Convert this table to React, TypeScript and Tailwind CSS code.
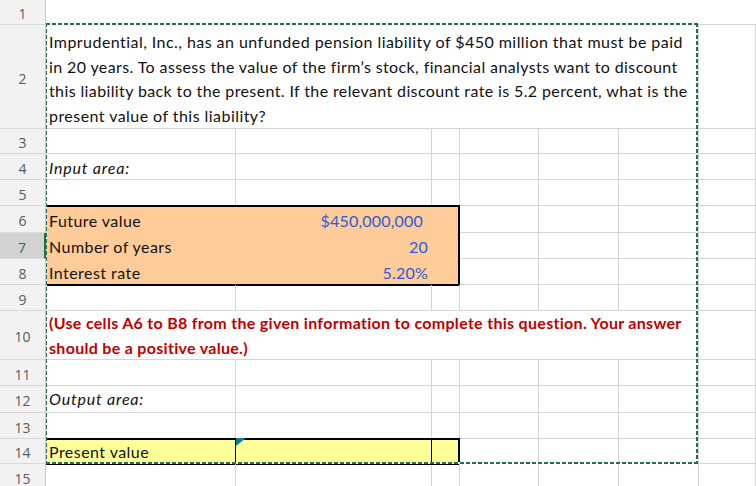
import React from "react";

const FONT = { fontFamily: "Lato, 'Liberation Sans', sans-serif" };
const HFONT = { fontFamily: "'Open Sans', 'Noto Sans', sans-serif" };

const G = "border-r border-b border-[#d4d4d4]";

function Hdr({ n, sel }: { n: number; sel?: boolean }) {
  return (
    <div
      style={HFONT}
      className={
        sel
          ? "flex items-center justify-center pt-[3px] text-[14px] tracking-normal bg-[#d2d2d2] text-[#217346] border-b border-[#d9d9d9] border-r-2 border-r-[#217346]"
          : "flex items-center justify-center pt-[3px] text-[14px] tracking-normal bg-[#f2f2f2] text-[#5a5a5a] border-b border-[#d9d9d9] border-r border-r-[#c8c8c8]"
      }
    >
      {n}
    </div>
  );
}

function Blank() {
  return <div className={G} />;
}

function Blanks({ n }: { n: number }) {
  return (
    <>
      {Array.from({ length: n }).map((_, i) => (
        <Blank key={i} />
      ))}
    </>
  );
}

export default function App() {
  return (
    <div
      className="relative w-[756px] h-[486px] overflow-hidden bg-white text-[#111] text-[16px] tracking-[0.45px]"
      style={FONT}
    >
      <div className="grid grid-cols-[46px_190px_196px_28px_79px_80px_80px_1fr] grid-rows-[25px_104px_25px_26px_26px_27px_26px_26px_26px_49px_26px_27px_26px_25px_26px]">
        {/* Row 1 */}
        <Hdr n={1} />
        <div className="col-span-7 border-b border-[#d4d4d4]" />

        {/* Row 2 */}
        <Hdr n={2} />
        <div className="col-span-6 border-r border-b border-[#d4d4d4] pl-[3px] pt-[5px] leading-[24.5px] whitespace-nowrap">
          <div>Imprudential, Inc., has an unfunded pension liability of $450 million that must be paid</div>
          <div className="tracking-[0.39px]">in 20 years. To assess the value of the firm’s stock, financial analysts want to discount</div>
          <div className="tracking-[0.38px]">this liability back to the present. If the relevant discount rate is 5.2 percent, what is the</div>
          <div>present value of this liability?</div>
        </div>
        <Blank />

        {/* Row 3 */}
        <Hdr n={3} />
        <Blanks n={7} />

        {/* Row 4 */}
        <Hdr n={4} />
        <div className={`${G} flex items-end pl-[3px] pb-[2px] leading-[18px] italic tracking-[0.8px]`}>Input area:</div>
        <Blanks n={6} />

        {/* Row 5 */}
        <Hdr n={5} />
        <Blanks n={7} />

        {/* Row 6-8 */}
        <Hdr n={6} />
        <div className="col-span-3 row-span-3 -mt-px -mb-px border-t-2 border-b-2 border-r-2 border-black bg-[#ffcc99] grid grid-rows-[25px_26px_26px] grid-cols-[190px_196px_1fr] leading-[18px]">
          <div className="flex items-end pl-[3px] pb-[2px]">Future value</div>
          <div className="flex items-end justify-end pr-[9px] pb-[2px] text-[#2d5bd6] tracking-[0.2px]">$450,000,000</div>
          <div />
          <div className="flex items-end pl-[3px] pb-[2px]">Number of years</div>
          <div className="flex items-end justify-end pr-[4px] pb-[2px] text-[#2d5bd6] tracking-[0.2px]">20</div>
          <div />
          <div className="flex items-end pl-[3px] pb-[2px]">Interest rate</div>
          <div className="flex items-end justify-end pr-[4px] pb-[2px] text-[#2d5bd6] tracking-[0.2px]">5.20%</div>
          <div />
        </div>
        <Blanks n={4} />
        <Hdr n={7} sel />
        <Blanks n={4} />
        <Hdr n={8} />
        <Blanks n={4} />

        {/* Row 9 */}
        <Hdr n={9} />
        <Blanks n={7} />

        {/* Row 10 */}
        <Hdr n={10} />
        <div className="col-span-6 border-r border-b border-[#d4d4d4] pl-[3px] leading-[25px] whitespace-nowrap font-bold text-[#c00000] tracking-[0.3px]">
          <div className="-mt-px">
            <div>(Use cells A6 to B8 from the given information to complete this question. Your answer</div>
            <div>should be a positive value.)</div>
          </div>
        </div>
        <Blank />

        {/* Row 11 */}
        <Hdr n={11} />
        <Blanks n={7} />

        {/* Row 12 */}
        <Hdr n={12} />
        <div className={`${G} flex items-end pl-[3px] pb-[4px] leading-[18px] italic tracking-[0.8px]`}>Output area:</div>
        <Blanks n={6} />

        {/* Row 13 */}
        <Hdr n={13} />
        <Blanks n={7} />

        {/* Row 14 */}
        <Hdr n={14} />
        <div className="-mt-px -mb-px border-t-2 border-b-2 border-r border-black bg-[#ffff99] flex items-end pl-[3px] pb-[2px] leading-[18px]">
          Present value
        </div>
        <div className="relative -mt-px -mb-px border-t-2 border-b-2 border-r border-black bg-[#ffff99]">
          <svg className="absolute -top-[2px] left-0" width="10" height="8" viewBox="0 0 10 8">
            <polygon points="0,0 10,0 0,8" fill="#137c8b" />
          </svg>
        </div>
        <div className="-mt-px -mb-px border-t-2 border-b-2 border-r-2 border-black bg-[#ffff99]" />
        <Blanks n={4} />

        {/* Row 15 */}
        <Hdr n={15} />
        <Blanks n={7} />
      </div>

      {/* Copy selection marquee */}
      <svg
        className="absolute left-[46px] top-[23px] pointer-events-none"
        width="652"
        height="441"
        viewBox="0 0 652 441"
      >
        <g stroke="#ffffff" fill="none">
          <line x1="0" y1="1" x2="652" y2="1" strokeWidth="2" />
          <line x1="651" y1="0" x2="651" y2="441" strokeWidth="2" />
          <line x1="0" y1="440" x2="652" y2="440" strokeWidth="2" />
          <line x1="0.5" y1="0" x2="0.5" y2="441" strokeWidth="1" />
        </g>
        <g stroke="#217346" fill="none" strokeDasharray="4 2">
          <line x1="0" y1="1" x2="652" y2="1" strokeWidth="2" />
          <line x1="651" y1="0" x2="651" y2="441" strokeWidth="2" />
          <line x1="0" y1="440" x2="652" y2="440" strokeWidth="2" />
          <line x1="0.5" y1="0" x2="0.5" y2="441" strokeWidth="1" />
        </g>
      </svg>
    </div>
  );
}
